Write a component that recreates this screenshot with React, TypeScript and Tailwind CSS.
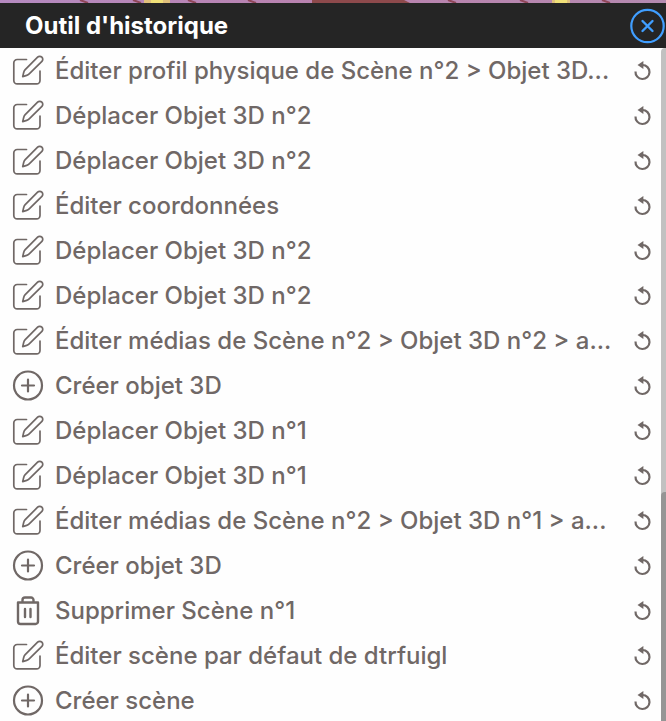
type ActionKind = "edit" | "create" | "delete";

interface HistoryEntry {
  kind: ActionKind;
  label: string;
}

const entries: HistoryEntry[] = [
  { kind: "edit", label: "Éditer profil physique de Scène n°2 > Objet 3D..." },
  { kind: "edit", label: "Déplacer Objet 3D n°2" },
  { kind: "edit", label: "Déplacer Objet 3D n°2" },
  { kind: "edit", label: "Éditer coordonnées" },
  { kind: "edit", label: "Déplacer Objet 3D n°2" },
  { kind: "edit", label: "Déplacer Objet 3D n°2" },
  { kind: "edit", label: "Éditer médias de Scène n°2 > Objet 3D n°2 > a..." },
  { kind: "create", label: "Créer objet 3D" },
  { kind: "edit", label: "Déplacer Objet 3D n°1" },
  { kind: "edit", label: "Déplacer Objet 3D n°1" },
  { kind: "edit", label: "Éditer médias de Scène n°2 > Objet 3D n°1 > a..." },
  { kind: "create", label: "Créer objet 3D" },
  { kind: "delete", label: "Supprimer Scène n°1" },
  { kind: "edit", label: "Éditer scène par défaut de dtrfuigl" },
  { kind: "create", label: "Créer scène" },
];

function ActionIcon({ kind }: { kind: ActionKind }) {
  return (
    <svg
      className="size-8 shrink-0"
      viewBox="0 0 32 32"
      fill="none"
      stroke="currentColor"
      strokeLinecap="round"
      strokeLinejoin="round"
      aria-hidden="true"
    >
      {kind === "edit" && (
        <g strokeWidth="1.700">
          <path d="M14.500 4.500H5.200A3.400 3.400 0 0 0 1.800 7.900v17.500A3.400 3.400 0 0 0 5.200 28.800h19.400a3.400 3.400 0 0 0 3.400-3.400V16" />
          <path d="M25.600 2.200a3 3 0 0 1 4.300 4.200L17.200 18.900a6 6 0 0 1-2.500 1.500l-4 1.200 1-4.100a6 6 0 0 1 1.500-2.800z" />
        </g>
      )}
      {kind === "create" && (
        <g strokeWidth="2.200">
          <circle cx="16" cy="15.500" r="14" />
          <path d="M16 9.500v12M10 15.500h12" />
        </g>
      )}
      {kind === "delete" && (
        <g strokeWidth="2.400">
          <path d="M6 7.500h20v19a2.500 2.500 0 0 1-2.500 2.500h-15A2.500 2.500 0 0 1 6 26.500z" />
          <path d="M10.500 6.500V5A2.500 2.500 0 0 1 13 2.500h6A2.500 2.500 0 0 1 21.500 5v1.500M13 14v8M18.500 14v8" />
        </g>
      )}
    </svg>
  );
}

function UndoIcon() {
  return (
    <svg className="size-5" viewBox="0 0 20 20" fill="none" aria-hidden="true">
      <path d="M9.500 4A7 7 0 1 1 2.500 10.500" stroke="currentColor" strokeWidth="2.200" />
      <path d="M4.500 4 10.400 0v8z" fill="currentColor" />
    </svg>
  );
}

// Sliver of the 3D scene visible above the panel
function SceneStrip() {
  return (
    <div className="h-[3px] shrink-0 bg-linear-to-r from-[#b58ac0] via-[#b982ae] to-[#b58ab0]">
      <svg className="block h-full w-full" viewBox="0 0 666 3" preserveAspectRatio="none" aria-hidden="true">
        <path d="M312 0h92l6 3h-98z" fill="#8e4a4c" />
        <path d="M80 0l8 3M133 0l8 3M188 0l8 3M248 0l8 3M448 0l8 3M520 0l8 3M602 0l8 3" stroke="#8f4658" strokeWidth="2" />
        <path d="M144 0h26v3h-26zM552 0h18v3h-18z" fill="#e0c07c" />
        <path d="M151 0h12v3h-12zM555 0h12v3h-12z" fill="#f0e078" />
      </svg>
    </div>
  );
}

export default function App() {
  return (
    <div className="flex h-screen flex-col overflow-hidden bg-[#fefefe] font-[Inter,sans-serif]">
      <SceneStrip />

      <header className="flex h-[45px] shrink-0 items-center justify-between bg-[#252525] pl-[25px]">
        <h1 className="text-2xl font-bold text-white">Outil d'historique</h1>
        <button type="button" aria-label="Fermer" className="text-[#409eff]">
          <svg className="size-9" viewBox="0 0 36 36" fill="none" stroke="currentColor" strokeLinecap="round" aria-hidden="true">
            <circle cx="17.500" cy="18" r="16.200" strokeWidth="2.200" />
            <path d="M12.500 13l10 10M22.500 13l-10 10" strokeWidth="2.400" />
          </svg>
        </button>
      </header>

      <div className="flex min-h-0 flex-1">
        <ul className="min-w-0 flex-1 overflow-hidden text-[#706866]">
          {entries.map((entry, i) => (
            <li key={i} className="flex h-[45px] items-center pr-2 pl-3">
              <ActionIcon kind={entry.kind} />
              <span className="ml-[11px] min-w-0 flex-1 truncate text-2xl font-medium">{entry.label}</span>
              <button type="button" aria-label="Annuler" className="ml-4 shrink-0">
                <UndoIcon />
              </button>
            </li>
          ))}
        </ul>
        <div className="flex w-[5px] shrink-0 flex-col rounded-tl bg-[#c1c1c1]" aria-hidden="true">
          <div className="h-[66%]" />
          <div className="flex-1 rounded-tl bg-[#959595]" />
        </div>
      </div>
    </div>
  );
}
